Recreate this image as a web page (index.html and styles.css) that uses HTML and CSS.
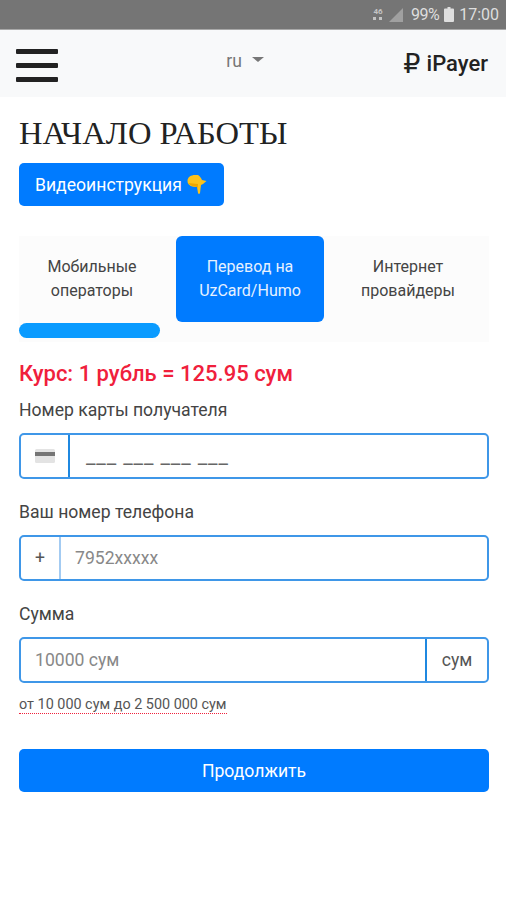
FILE: index.html
```html
<!DOCTYPE html>
<html lang="ru">

<head>
    <meta charset="UTF-8" />
    <meta name="viewport" content="width=device-width, initial-scale=1.0" />
    <title>iPayer</title>
    <link rel="stylesheet" href="styles.css">
</head>

<body>
    <div class="status-bar">
        <svg class="net-icon" width="12" height="15" viewBox="0 0 12 15">
            <text x="6" y="7" class="net-text">46</text>
            <path d="M1 10h3v3H1zM7 10h3v3H7z" fill="#c4c4c4" />
        </svg>
        <svg class="signal-icon" width="14" height="14" viewBox="0 0 14 14">
            <path d="M0 14 14 0v14z" fill="#a0a0a0" />
        </svg>
        <span class="battery-level">99%</span>
        <svg class="battery-icon" width="10" height="15" viewBox="0 0 10 15">
            <path d="M3.500 0h3v1.500H9a1 1 0 0 1 1 1V14a1 1 0 0 1-1 1H1a1 1 0 0 1-1-1V2.500a1 1 0 0 1 1-1h2.500z" fill="#dedede" />
        </svg>
        <span>17:00</span>
    </div>

    <nav class="navbar">
        <div class="burger"><i></i><i></i><i></i></div>
        <div class="lang">ru<b class="caret"></b></div>
        <div class="brand"><span class="rub">₽</span><span>iPayer</span></div>
    </nav>

    <main class="content">
        <h1>НАЧАЛО РАБОТЫ</h1>
        <button class="btn video-btn">Видеоинструкция
            <svg class="hand" width="20" height="20" viewBox="0 0 20 20">
                <path d="M0.500 6C0.500 2 4 0 8 0h3c2 1 3 3 4 5l4.500 1-3.500 3-2 1-1 8q-1 2-2 0l-1-6C6 12 0.500 11 0.500 6z" fill="#fcc21b" />
                <path d="M1 8c2 2.500 5 3.500 9 4l.500 2 .500-5z" fill="#eda600" />
            </svg>
        </button>

        <div class="tabs">
            <div class="tab-col">
                <div class="tab">Мобильные<br>операторы</div>
                <div class="tab-bar"></div>
            </div>
            <div class="tab-col">
                <div class="tab active">Перевод на<br>UzCard/Humo</div>
            </div>
            <div class="tab-col last">
                <div class="tab">Интернет<br>провайдеры</div>
            </div>
        </div>

        <div class="rate">Курс: 1 рубль = 125.95 сум</div>

        <label>Номер карты получателя</label>
        <div class="input-group">
            <div class="addon card-addon">
                <svg width="20" height="14" viewBox="0 0 20 14">
                    <rect width="20" height="14" rx="1.500" fill="#e3e3e3" />
                    <rect y="3" width="20" height="4" fill="#757575" />
                </svg>
            </div>
            <div class="field mask">___ ___ ___ ___</div>
        </div>

        <label>Ваш номер телефона</label>
        <div class="input-group">
            <div class="addon plus-addon">+</div>
            <div class="field">7952xxxxx</div>
        </div>

        <label>Сумма</label>
        <div class="input-group">
            <div class="field sum-field">10000 сум</div>
            <div class="addon sum-addon">сум</div>
        </div>

        <div class="hint"><span>от 10 000 сум до 2 500 000 сум</span></div>

        <button class="btn submit-btn">Продолжить</button>
    </main>
</body>

</html>
```

FILE: styles.css
```css
body {
    margin: 0;
    font-family: Roboto, "Liberation Sans", sans-serif;
    color: #333;
    background-color: #fff;
}

.status-bar {
    height: 29px;
    border-bottom: 1px solid #a8a8a8;
    background-color: #757575;
    color: #dedede;
    font-size: 16px;
    display: flex;
    align-items: center;
    justify-content: flex-end;
    gap: 5px;
    padding-right: 7px;
}

.net-text {
    font-size: 8px;
    font-weight: 700;
    fill: #c4c4c4;
    text-anchor: middle;
}

.signal-icon {
    margin-right: 3px;
}

.battery-level {
    letter-spacing: -0.5px;
}

.navbar {
    height: 67px;
    background-color: #f8f9fa;
    display: flex;
    align-items: center;
    justify-content: space-between;
    padding: 0 18px 0 16px;
}

.burger {
    width: 42px;
    margin-top: 4px;
    display: flex;
    flex-direction: column;
    gap: 9px;
}

.burger i {
    display: block;
    height: 5px;
    border-radius: 1px;
    background-color: #222;
}

.lang {
    margin: 0 0 5px 29px;
    font-size: 17.6px;
    color: #777;
    display: flex;
    align-items: center;
    gap: 10px;
}

.caret {
    width: 0;
    height: 0;
    margin-bottom: 4px;
    border-top: 5px solid #777;
    border-left: 6px solid transparent;
    border-right: 6px solid transparent;
}

.brand {
    font-size: 22px;
    font-weight: 500;
    color: #222;
    display: flex;
    align-items: center;
    gap: 6px;
}

.rub {
    font-family: "DejaVu Sans", sans-serif;
    font-size: 27px;
    line-height: 30px;
    font-weight: 400;
}

.content {
    padding: 0 17px 0 19px;
}

h1 {
    margin: 18px 0 11px;
    font-family: "Liberation Serif", serif;
    font-size: 32.6px;
    line-height: 37px;
    font-weight: 400;
    color: #222;
}

.btn {
    display: block;
    border: none;
    border-radius: 5px;
    background-color: #007bff;
    color: #fff;
    font-family: inherit;
    font-size: 17.6px;
}

.video-btn {
    width: 205px;
    height: 43px;
    padding: 0 0 0 16px;
    display: flex;
    align-items: center;
    gap: 5px;
    white-space: nowrap;
}

.tabs {
    margin-top: 30px;
    height: 106px;
    background-color: #fcfcfc;
    display: grid;
    grid-template-columns: 146px 148px 1fr;
    column-gap: 11px;
}

.tab-col.last {
    padding-right: 8px;
}

.tab {
    height: 86px;
    border-radius: 6px;
    font-size: 16px;
    line-height: 24px;
    color: #444;
    display: flex;
    align-items: center;
    justify-content: center;
    text-align: center;
}

.tab.active {
    background-color: #007bff;
    color: #e6f1ff;
}

.tab-bar {
    width: 141px;
    height: 15px;
    margin-top: 1px;
    border-radius: 8px;
    background-color: #0a9bff;
}

.rate {
    margin-top: 18px;
    font-size: 22px;
    line-height: 28px;
    font-weight: 500;
    color: #f0203c;
}

label {
    display: block;
    margin-bottom: 11px;
    font-size: 17.6px;
    line-height: 24px;
    color: #444;
}

.rate + label {
    margin-top: 10px;
}

.input-group {
    height: 42px;
    margin-bottom: 21px;
    border: 2px solid #3f97e8;
    border-radius: 5px;
    display: flex;
    align-items: stretch;
    font-size: 17.6px;
}

.addon {
    display: flex;
    align-items: center;
    justify-content: center;
    color: #555;
}

.card-addon {
    width: 47px;
    border-right: 2px solid #1f88e0;
}

.plus-addon {
    width: 38px;
    border-right: 2px solid #a3cbf2;
}

.sum-addon {
    width: 60px;
    border-left: 2px solid #1f88e0;
}

.field {
    flex: 1;
    padding-left: 14px;
    display: flex;
    align-items: center;
    color: #888;
}

.field.mask {
    padding-left: 16px;
    color: #666;
    font-size: 21px;
    letter-spacing: 0.9px;
}

.hint {
    margin-top: -8px;
    font-size: 14.4px;
    line-height: 18px;
    color: #555;
}

.hint span {
    border-bottom: 1px dotted #f0203c;
}

.submit-btn {
    width: 100%;
    height: 43px;
    margin-top: 35px;
}
```
